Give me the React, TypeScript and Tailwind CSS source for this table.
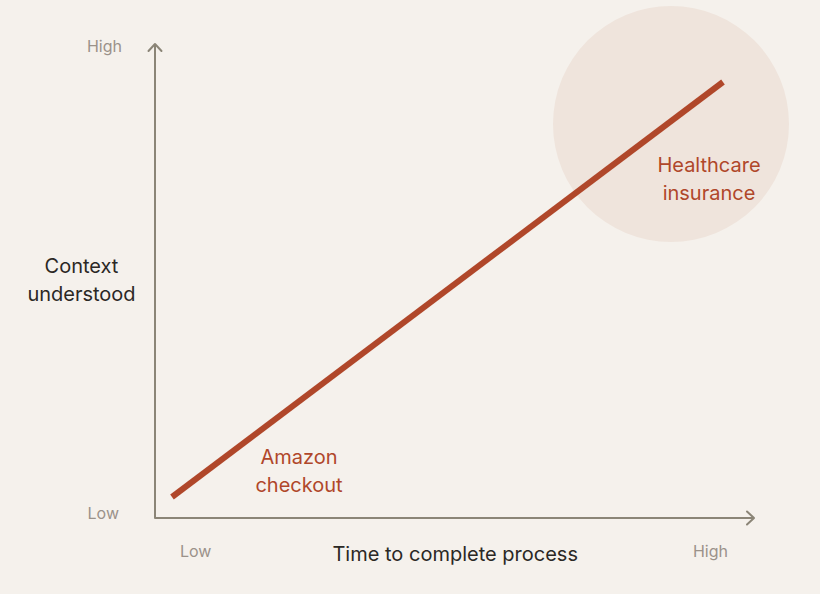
const font = { fontFamily: "Inter, 'Noto Sans', sans-serif" };

export default function App() {
  return (
    <div className="relative w-[820px] h-[594px] bg-[#f5f1ec] overflow-hidden" style={font}>
      {/* chart drawing sits under the labels */}
      <svg width="820" height="594" viewBox="0 0 820 594" className="absolute inset-0">
        <circle cx="671" cy="124" r="118" fill="#efe4dc" />
        <g stroke="#8b8577" strokeWidth="2" fill="none" strokeLinecap="round" strokeLinejoin="round">
          <path d="M155 44 L155 518 L754 518" strokeLinecap="butt" />
          <path d="M148.5 51 L155 44 L161.5 51" />
          <path d="M747 511.5 L754 518 L747 524.5" />
        </g>
        <line x1="172" y1="497" x2="723" y2="82" stroke="#b0472a" strokeWidth="6" />
      </svg>

      <div className="relative grid grid-cols-[155px_1fr] grid-rows-[522px_1fr] h-full">
        {/* y axis labels */}
        <div className="flex flex-col justify-between pt-[37px]">
          <span className="self-end mr-[33px] text-[16px] leading-[18px] text-[#9b928a]">High</span>
          <div className="pl-[8px] text-center text-[20px] leading-[28px] text-[#2b2825]">
            Context
            <br />
            understood
          </div>
          <span className="self-end mr-[36px] text-[16px] leading-[18px] text-[#9b928a]">Low</span>
        </div>

        {/* plot area with annotations */}
        <div className="relative">
          <div className="absolute left-[74px] top-[443px] w-[140px] text-center text-[20px] leading-[28px] text-[#b0472a]">
            Amazon
            <br />
            checkout
          </div>
          <div className="absolute left-[484px] top-[151px] w-[140px] text-center text-[20px] leading-[28px] text-[#b0472a]">
            Healthcare
            <br />
            insurance
          </div>
        </div>

        {/* x axis labels */}
        <div className="col-span-2 flex items-start justify-between pt-[20px] pl-[180px] pr-[92px]">
          <span className="text-[16px] leading-[18px] text-[#9b928a]">Low</span>
          <span className="-mt-[2px] ml-[6px] text-[20px] leading-[28px] text-[#2b2825]">Time to complete process</span>
          <span className="text-[16px] leading-[18px] text-[#9b928a]">High</span>
        </div>
      </div>
    </div>
  );
}
